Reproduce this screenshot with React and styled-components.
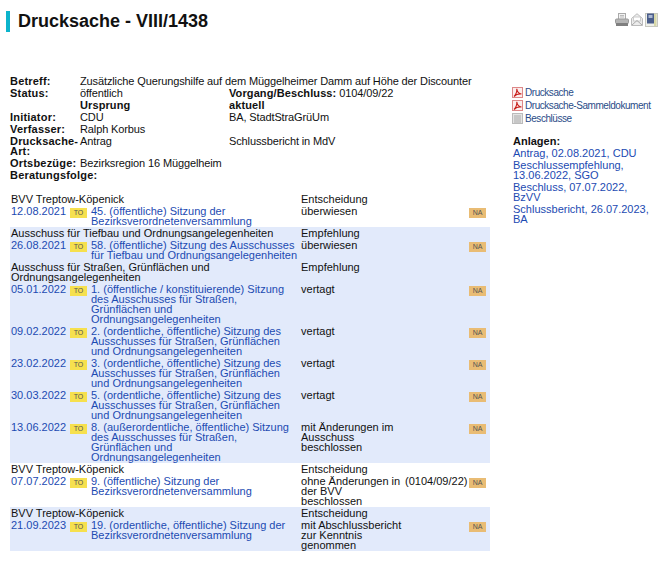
import styled, { createGlobalStyle } from 'styled-components';

const GlobalStyle = createGlobalStyle`
  html, body {
    margin: 0;
    padding: 0;
    background: #fff;
    color: #111;
    font-family: "Liberation Sans", Arial, sans-serif;
    font-size: 11px;
    line-height: 10px;
  }
  a {
    color: #1c4ab2;
    text-decoration: none;
  }
`;

const META = [
  { label: 'Betreff:', value: 'Zusätzliche Querungshilfe auf dem Müggelheimer Damm auf Höhe der Discounter', wide: true },
  { label: 'Status:', value: 'öffentlich', extraLabel: 'Vorgang/Beschluss:', extra: ' 0104/09/22' },
  { valueLabel: 'Ursprung', extraLabel: 'aktuell' },
  { label: 'Initiator:', value: 'CDU', extra: 'BA, StadtStraGrüUm' },
  { label: 'Verfasser:', value: 'Ralph Korbus' },
  { label: 'Drucksache-Art:', value: 'Antrag', extra: 'Schlussbericht in MdV' },
  { label: 'Ortsbezüge:', value: 'Bezirksregion 16 Müggelheim', wide: true },
  { label: 'Beratungsfolge:' },
];

const BVV = 'BVV Treptow-Köpenick';
const TIEFBAU = 'Ausschuss für Tiefbau und Ordnungsangelegenheiten';
const STRASSEN = 'Ausschuss für Straßen, Grünflächen und Ordnungsangelegenheiten';

const ROWS = [
  { organ: BVV, kind: 'Entscheidung' },
  { date: '12.08.2021', title: '45. (öffentliche) Sitzung der Bezirksverordnetenversammlung', result: 'überwiesen' },
  { organ: TIEFBAU, kind: 'Empfehlung', shaded: true },
  { date: '26.08.2021', title: '58. (öffentliche) Sitzung des Ausschusses für Tiefbau und Ordnungsangelegenheiten', result: 'überwiesen', shaded: true },
  { organ: STRASSEN, kind: 'Empfehlung', shaded: true },
  { date: '05.01.2022', title: '1. (öffentliche / konstituierende) Sitzung des Ausschusses für Straßen, Grünflächen und Ordnungsangelegenheiten', result: 'vertagt', shaded: true },
  { date: '09.02.2022', title: '2. (ordentliche, öffentliche) Sitzung des Ausschusses für Straßen, Grünflächen und Ordnungsangelegenheiten', result: 'vertagt', shaded: true },
  { date: '23.02.2022', title: '3. (ordentliche, öffentliche) Sitzung des Ausschusses für Straßen, Grünflächen und Ordnungsangelegenheiten', result: 'vertagt', shaded: true },
  { date: '30.03.2022', title: '5. (ordentliche, öffentliche) Sitzung des Ausschusses für Straßen, Grünflächen und Ordnungsangelegenheiten', result: 'vertagt', shaded: true },
  { date: '13.06.2022', title: '8. (außerordentliche, öffentliche) Sitzung des Ausschusses für Straßen, Grünflächen und Ordnungsangelegenheiten', result: 'mit Änderungen im Ausschuss beschlossen', shaded: true },
  { organ: BVV, kind: 'Entscheidung' },
  { date: '07.07.2022', title: '9. (öffentliche) Sitzung der Bezirksverordnetenversammlung', result: 'ohne Änderungen in der BVV beschlossen', ref: '(0104/09/22)' },
  { organ: BVV, kind: 'Entscheidung', shaded: true },
  { date: '21.09.2023', title: '19. (ordentliche, öffentliche) Sitzung der Bezirksverordnetenversammlung', result: 'mit Abschlussbericht zur Kenntnis genommen', shaded: true },
];

const DOCS = [
  { label: 'Drucksache', icon: 'pdf' },
  { label: 'Drucksache-Sammeldokument', icon: 'pdf' },
  { label: 'Beschlüsse', icon: 'sheet' },
];

const ATTACHMENTS = [
  'Antrag, 02.08.2021, CDU',
  'Beschlussempfehlung, 13.06.2022, SGO',
  'Beschluss, 07.07.2022, BzVV',
  'Schlussbericht, 26.07.2023, BA',
];

function PdfIcon() {
  return (
    <DocIcon viewBox="0 0 11 11" fill="none">
      <rect x="0.5" y="0.5" width="10" height="10" fill="#fbeeee" stroke="#d88" />
      <path d="M2 9.5C3.5 8 5 4.5 4.8 1.8C5 4 6.5 6.5 9.5 7C7 6.6 4 7.5 2 9.5Z" stroke="#c8201c" strokeWidth="1.1" />
    </DocIcon>
  );
}

function SheetIcon() {
  return (
    <DocIcon viewBox="0 0 11 11" fill="none">
      <rect x="0.5" y="0.5" width="10" height="10" fill="#e4e4e4" stroke="#bbb" />
      <path d="M2 3H9M2 5H9M2 7H9M2 9H9" stroke="#aaa" />
    </DocIcon>
  );
}

function PrintIcon() {
  return (
    <svg width="14" height="13" viewBox="0 0 14 13">
      <rect x="3.5" y="0.5" width="7" height="6" fill="#f2f2f2" stroke="#aaa" />
      <path d="M5 2.5H9M5 4H9" stroke="#bbb" />
      <rect x="0.5" y="6" width="13" height="4.5" rx="1" fill="#b5b5b5" stroke="#999" />
      <rect x="1" y="10" width="12" height="3" fill="#7f7f7f" />
    </svg>
  );
}

function MailIcon() {
  return (
    <svg width="12" height="13" viewBox="0 0 12 13">
      <path d="M0.5 5.5L6 0.7L11.5 5.5V12.5H0.5Z" fill="#ececec" stroke="#bbb" />
      <rect x="2.5" y="4" width="7" height="4" fill="#fff" stroke="#ccc" />
      <path d="M1 12L6 7.5L11 12" fill="none" stroke="#aaa" />
    </svg>
  );
}

function BookIcon() {
  return (
    <svg width="13" height="14" viewBox="0 0 13 14">
      <rect x="0.5" y="0.5" width="12" height="13" fill="#eef0ea" stroke="#c8c8c0" />
      <rect x="2" y="0.5" width="7" height="10" fill="#4a5d8a" />
      <rect x="3.5" y="2" width="4" height="3" fill="#a9b6d0" />
      <rect x="9" y="1" width="2.5" height="12" fill="#d8d8a8" />
    </svg>
  );
}

export default function App() {
  return (
    <Page>
      <GlobalStyle />
      <Header>
        <Title>Drucksache - VIII/1438</Title>
        <Tools>
          <PrintIcon />
          <MailIcon />
          <BookIcon />
        </Tools>
      </Header>
      <Columns>
        <Main>
          <MetaTable>
            <colgroup>
              <Col $width={70} />
              <Col $width={149} />
              <col />
            </colgroup>
            <tbody>
              {META.map((row, i) => (
                <tr key={i}>
                  <MetaLabel>{row.label}</MetaLabel>
                  <MetaValue colSpan={row.wide ? 2 : 1}>
                    {row.valueLabel && <MetaStrong>{row.valueLabel}</MetaStrong>}
                    {row.value}
                  </MetaValue>
                  {!row.wide && (
                    <MetaValue>
                      {row.extraLabel && <MetaStrong>{row.extraLabel}</MetaStrong>}
                      {row.extra}
                    </MetaValue>
                  )}
                </tr>
              ))}
            </tbody>
          </MetaTable>
          <FlowTable>
            <colgroup>
              <Col $width={59} />
              <Col $width={21} />
              <Col $width={210} />
              <Col $width={104} />
              <Col $width={64} />
              <Col $width={22} />
            </colgroup>
            <tbody>
              {ROWS.map((row, i) =>
                row.organ ? (
                  <Row key={i} $shaded={row.shaded}>
                    <Cell colSpan={3}>{row.organ}</Cell>
                    <Cell colSpan={3}>{row.kind}</Cell>
                  </Row>
                ) : (
                  <Row key={i} $shaded={row.shaded}>
                    <Cell><a href="#">{row.date}</a></Cell>
                    <Cell><Badge $bg="#f6e04e">TO</Badge></Cell>
                    <Cell><a href="#">{row.title}</a></Cell>
                    <Cell>{row.result}</Cell>
                    <Cell>{row.ref}</Cell>
                    <Cell><Badge $bg="#e9bc74">NA</Badge></Cell>
                  </Row>
                )
              )}
            </tbody>
          </FlowTable>
        </Main>
        <Aside>
          <DocList>
            {DOCS.map((doc) => (
              <DocLink href="#" key={doc.label}>
                {doc.icon === 'pdf' ? <PdfIcon /> : <SheetIcon />}
                {doc.label}
              </DocLink>
            ))}
          </DocList>
          <AttachHeading>Anlagen:</AttachHeading>
          {ATTACHMENTS.map((item) => (
            <Attachment href="#" key={item}>{item}</Attachment>
          ))}
        </Aside>
      </Columns>
    </Page>
  );
}

const Page = styled.div`
  width: 662px;
  height: 564px;
  overflow: hidden;
`;

const Header = styled.header`
  display: flex;
  justify-content: space-between;
  align-items: flex-start;
  padding: 11px 4px 0 6px;
`;

const Title = styled.h1`
  margin: 0;
  padding-left: 8px;
  border-left: 4px solid #0cb4cc;
  font-size: 18px;
  line-height: 21px;
  font-weight: bold;
  color: #111;
`;

const Tools = styled.div`
  display: flex;
  align-items: flex-start;
  gap: 2px;
  padding-top: 2px;
`;

const Columns = styled.div`
  display: flex;
  padding: 43px 0 0 10px;
`;

const Main = styled.main`
  width: 480px;
`;

const Aside = styled.aside`
  width: 138px;
  margin-left: 23px;
  padding-top: 12px;
`;

const MetaTable = styled.table`
  width: 480px;
  table-layout: fixed;
  border-collapse: collapse;
  margin-bottom: 12px;
`;

const FlowTable = styled.table`
  width: 480px;
  table-layout: fixed;
  border-collapse: collapse;
`;

const Col = styled.col`
  width: ${({ $width }) => $width}px;
`;

const Row = styled.tr`
  background: ${({ $shaded }) => ($shaded ? '#e2eafb' : 'transparent')};
`;

const Cell = styled.td`
  padding: 1px 0 1px 1px;
  vertical-align: top;
  line-height: 10px;
`;

const MetaLabel = styled(Cell)`
  padding-left: 0;
  font-weight: bold;
  letter-spacing: 0.2px;
`;

const MetaValue = styled(Cell)`
  padding-left: 0;
  letter-spacing: -0.12px;
`;

const MetaStrong = styled.b`
  letter-spacing: 0.1px;
`;

const Badge = styled.span`
  display: block;
  width: 17px;
  height: 10px;
  margin-top: 2px;
  background: ${({ $bg }) => $bg};
  color: #555;
  font-size: 7px;
  line-height: 10px;
  text-align: center;
`;

const DocList = styled.nav`
  display: flex;
  flex-direction: column;
  gap: 2px;
  margin: 0 0 11px -1px;
`;

const DocLink = styled.a`
  display: flex;
  align-items: center;
  gap: 2px;
  height: 11px;
  font-size: 10px;
  letter-spacing: -0.45px;
  color: #2a4c88;
  white-space: nowrap;
`;

const DocIcon = styled.svg`
  flex: none;
  width: 11px;
  height: 11px;
`;

const AttachHeading = styled.h3`
  margin: 0;
  padding: 1px 0;
  font-size: 11px;
  line-height: 10px;
  font-weight: bold;
  color: #111;
`;

const Attachment = styled.a`
  display: block;
  padding: 1px 0;
  line-height: 10px;
`;
